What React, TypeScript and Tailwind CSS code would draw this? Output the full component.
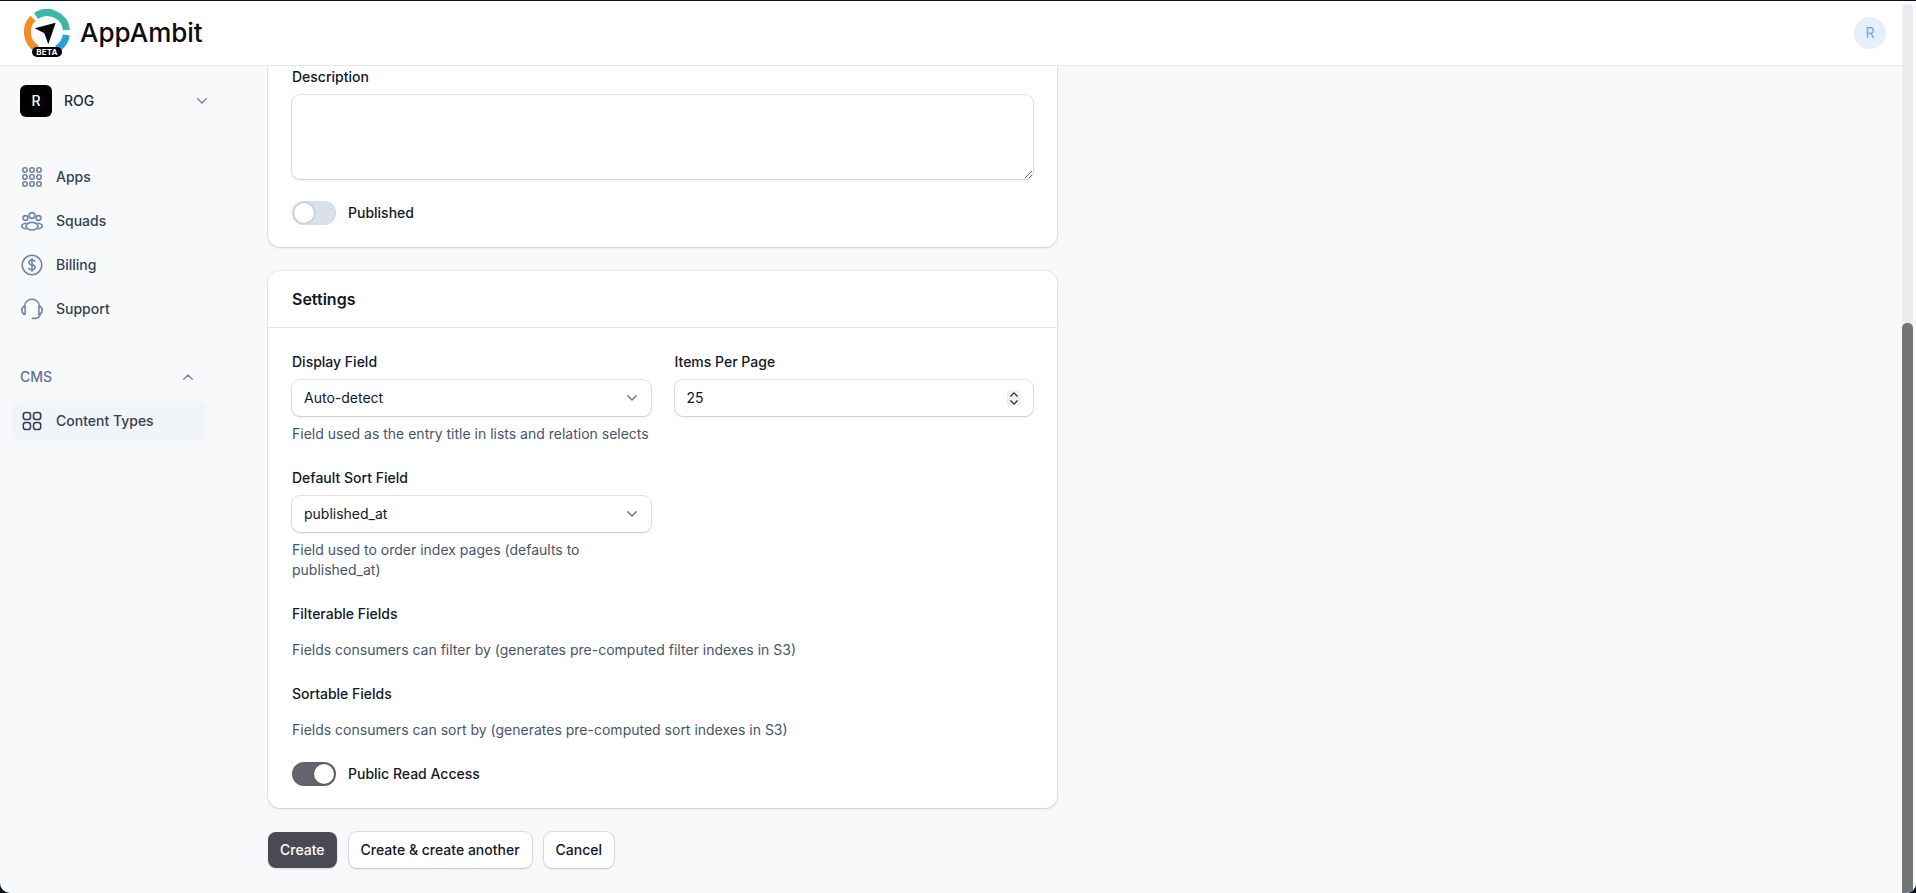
import React from "react";

const iconStroke = "#7385a8";

function Ico({ children, className = "w-6 h-6", color = iconStroke }: { children: React.ReactNode; className?: string; color?: string }) {
  return (
    <svg viewBox="0 0 24 24" fill="none" stroke={color} strokeWidth={1.6} strokeLinecap="round" strokeLinejoin="round" className={`${className} shrink-0`}>
      {children}
    </svg>
  );
}

function Chevron({ up = false, color = "#6b7280", className = "w-[10px] h-[6px]" }: { up?: boolean; color?: string; className?: string }) {
  return (
    <svg viewBox="0 0 10 6" fill="none" stroke={color} strokeWidth={1.4} strokeLinecap="round" strokeLinejoin="round" className={`${className} shrink-0`}>
      <path d={up ? "M.8 5.2 5 1l4.2 4.2" : "M.8.8 5 5 9.2.8"} />
    </svg>
  );
}

function Logo() {
  return (
    <div className="relative w-[54px] h-[54px] shrink-0">
      <svg viewBox="20 6 54 54" className="w-[54px] h-[54px]" fill="none" strokeWidth={7}>
        <path d="M36 16A19.5 19.5 0 0 1 66.5 30" stroke="#3cb8a8" />
        <path d="M66.3 35A19.5 19.5 0 0 1 57 48.7" stroke="#2a9fdc" />
        <path d="M33 18.3A19.5 19.5 0 0 0 37 48.8" stroke="#f28c28" />
        <path d="M34.7 28.3 55.7 22.7 48.3 44.3 44.3 33.3Z" fill="#0c0c0c" />
      </svg>
      <span className="absolute left-[12px] top-[41px] w-[30px] h-[10px] rounded-full bg-black text-white text-[8px] leading-[10px] font-bold text-center tracking-[0.2px]">
        BETA
      </span>
    </div>
  );
}

function NavItem({ label, icon, active = false }: { label: string; icon: React.ReactNode; active?: boolean }) {
  return (
    <div className={`flex items-center gap-3 h-10 pl-2 rounded-lg text-sm font-medium ${active ? "bg-[#f1f4f9] text-[#374151]" : "text-[#334155]"}`}>
      {icon}
      <span>{label}</span>
    </div>
  );
}

function Sidebar() {
  return (
    <aside className="w-[268px] shrink-0 pt-[19px] flex flex-col">
      <div className="flex items-center pl-5 pr-[61px] h-8">
        <div className="w-8 h-8 rounded-md bg-black text-white text-sm font-medium flex items-center justify-center">R</div>
        <span className="ml-3 text-sm font-medium text-[#1e293b]">ROG</span>
        <span className="ml-auto flex"><Chevron color="#7385a8" /></span>
      </div>
      <nav className="mt-10 ml-3 w-[194px] flex flex-col gap-1">
        <NavItem
          label="Apps"
          icon={
            <Ico>
              {[5, 12, 19].map((x) =>
                [5, 12, 19].map((y) => <circle key={`${x}-${y}`} cx={x} cy={y} r={2.2} />)
              )}
            </Ico>
          }
        />
        <NavItem
          label="Squads"
          icon={
            <Ico>
              <circle cx="5.5" cy="9" r="2.4" />
              <circle cx="12" cy="6.5" r="2.9" />
              <circle cx="18.5" cy="9" r="2.4" />
              <ellipse cx="12" cy="17.2" rx="6" ry="3.8" />
              <path d="M6 14.2c-2.2.2-4.2 1.4-4.4 3 .2 1.5 2.2 2.4 5.2 2.5M18 14.2c2.2.2 4.2 1.4 4.4 3-.2 1.5-2.2 2.4-5.2 2.5" />
            </Ico>
          }
        />
        <NavItem
          label="Billing"
          icon={
            <Ico>
              <circle cx="12" cy="12" r="9.8" />
              <path d="M12 5.8v12.4M8.8 15.4l.9.7c1.3 1 3.3 1 4.6 0s1.3-2.5 0-3.5c-.6-.4-1.5-.7-2.3-.7s-1.6-.2-2.2-.7c-1.2-1-1.2-2.5 0-3.5s3.2-1 4.4 0l.4.4" />
            </Ico>
          }
        />
        <NavItem
          label="Support"
          icon={
            <Ico>
              <path d="M4.4 9.4C4.8 5.2 8 2.2 12 2.2s7.2 3 7.6 7.2" />
              <path d="M4.6 9.2C2.9 9.6 1.8 11.2 1.8 13.3s1.1 3.7 2.8 4.1c.3 0 .5-.2.5-.5V9.7c0-.3-.2-.5-.5-.5Z" />
              <path d="M19.4 9.2c1.7.4 2.8 2 2.8 4.1s-1.1 3.7-2.8 4.1c-.3 0-.5-.2-.5-.5V9.7c0-.3.2-.5.5-.5Z" />
              <path d="M20 17.4c-.4 2.4-2.4 3.9-5 4h-2.6" />
            </Ico>
          }
        />
      </nav>
      <div className="mt-[38px] flex items-center justify-between h-5 pl-5 pr-[75px] text-sm font-medium text-[#64748b]">
        <span>CMS</span>
        <Chevron up color="#7385a8" />
      </div>
      <div className="mt-[14px] ml-3 w-[194px]">
        <NavItem
          active
          label="Content Types"
          icon={
            <Ico color="#374151">
              <rect x="3.3" y="3.5" width="7.2" height="7" rx="2.6" />
              <rect x="13.5" y="3.5" width="7.2" height="7" rx="2.6" />
              <rect x="3.3" y="13.5" width="7.2" height="7" rx="2.6" />
              <rect x="13.5" y="13.5" width="7.2" height="7" rx="2.6" />
            </Ico>
          }
        />
      </div>
    </aside>
  );
}

function Label({ children }: { children: React.ReactNode }) {
  return <div className="text-sm leading-5 font-medium text-[#111827]">{children}</div>;
}

function Help({ children }: { children: React.ReactNode }) {
  return <div className="text-sm leading-5 text-[#475569]">{children}</div>;
}

function SelectBox({ value }: { value: string }) {
  return (
    <div className="h-9 rounded-lg bg-white shadow-sm ring-1 ring-gray-950/10 pl-3 pr-[14px] flex items-center justify-between text-sm text-[#111827]">
      <span>{value}</span>
      <Chevron />
    </div>
  );
}

function Toggle({ on, label }: { on: boolean; label: string }) {
  return (
    <div className="flex items-center h-5 gap-3">
      <div className={`w-11 h-6 rounded-full p-[2px] flex shadow-[inset_0_0_2px_rgba(0,0,0,0.1)] ${on ? "bg-[#64646f] justify-end" : "bg-[#dbe1ea] justify-start"}`}>
        <div className="w-5 h-5 rounded-full bg-white shadow-[0_0_2px_rgba(0,0,0,0.35)]" />
      </div>
      <span className="text-sm font-medium text-[#111827]">{label}</span>
    </div>
  );
}

function Card({ children, className = "" }: { children: React.ReactNode; className?: string }) {
  return <section className={`bg-white shadow-sm ring-1 ring-gray-950/5 ${className}`}>{children}</section>;
}

function Main() {
  return (
    <main className="flex-1 min-w-0 overflow-hidden pl-px -ml-px">
      <div className="w-[789px] flex flex-col">
        <Card className="rounded-b-xl px-6 pt-px pb-6">
          <Label>Description</Label>
          <textarea className="mt-2 block w-full h-[84px] rounded-lg bg-white shadow-sm ring-1 ring-gray-950/10 outline-none" />
          <div className="mt-6">
            <Toggle on={false} label="Published" />
          </div>
        </Card>

        <Card className="mt-6 rounded-xl">
          <div className="h-[57px] border-b border-[#e5e7eb] px-6 flex items-center text-base font-semibold text-[#111827] pb-px">Settings</div>
          <div className="p-6 flex flex-col gap-6">
            <div className="grid grid-cols-2 gap-x-6 gap-y-6">
              <div className="flex flex-col gap-2">
                <Label>Display Field</Label>
                <SelectBox value="Auto-detect" />
                <Help>Field used as the entry title in lists and relation selects</Help>
              </div>
              <div className="flex flex-col gap-2">
                <Label>Items Per Page</Label>
                <div className="h-9 rounded-lg bg-white shadow-sm ring-1 ring-gray-950/10 pl-3 pr-3 flex items-center justify-between text-sm text-[#111827]">
                  <span>25</span>
                  <span className="w-[14px] h-4 rounded-[3px] bg-[#f1f1f3] flex flex-col items-center justify-center gap-[3px]">
                    <Chevron up color="#27272a" className="w-[8px] h-[5px]" />
                    <Chevron color="#27272a" className="w-[8px] h-[5px]" />
                  </span>
                </div>
              </div>
              <div className="flex flex-col gap-2">
                <Label>Default Sort Field</Label>
                <SelectBox value="published_at" />
                <Help>Field used to order index pages (defaults to published_at)</Help>
              </div>
            </div>
            <div className="flex flex-col gap-4">
              <Label>Filterable Fields</Label>
              <Help>Fields consumers can filter by (generates pre-computed filter indexes in S3)</Help>
            </div>
            <div className="flex flex-col gap-4">
              <Label>Sortable Fields</Label>
              <Help>Fields consumers can sort by (generates pre-computed sort indexes in S3)</Help>
            </div>
            <Toggle on label="Public Read Access" />
          </div>
        </Card>

        <div className="mt-6 flex gap-3 text-sm font-medium">
          <button className="h-9 px-3 rounded-lg bg-[#4a4a55] text-white shadow-sm">Create</button>
          <button className="h-9 px-3 rounded-lg bg-white text-[#111827] shadow-sm ring-1 ring-gray-950/10">Create &amp; create another</button>
          <button className="h-9 px-3 rounded-lg bg-white text-[#111827] shadow-sm ring-1 ring-gray-950/10">Cancel</button>
        </div>
      </div>
    </main>
  );
}

export default function App() {
  return (
    <div className="h-[893px] w-[1916px] overflow-hidden bg-[#0b0f1f] pt-px font-['Inter',sans-serif] antialiased">
      <div className="h-full flex rounded-b-[10px] overflow-hidden bg-[#f8f9fb]">
        <div className="w-[1902px] shrink-0 flex flex-col">
          <header className="relative z-10 h-[65px] shrink-0 bg-white border-b border-[#e5e7eb] flex items-center justify-between pl-[20px] pr-4">
            <div className="flex items-center gap-[6px] -mt-[1px]">
              <Logo />
              <span className="text-[26px] font-medium text-[#0c0c0c]">AppAmbit</span>
            </div>
            <div className="w-8 h-8 rounded-full bg-[#e6effc] text-[#7c9cf0] text-sm flex items-center justify-center">R</div>
          </header>
          <div className="flex-1 min-h-0 flex">
            <Sidebar />
            <Main />
          </div>
        </div>
        <div className="w-[11px] shrink-0 pt-[3px] bg-[#f9fafb]">
          <div className="h-full rounded-t-[5px] bg-[#ececee] flex flex-col justify-end">
            <div className="h-[570px] rounded-t-[5px] bg-[#737476]" />
          </div>
        </div>
        <div className="w-[3px] shrink-0 bg-[#f9fafb]" />
      </div>
    </div>
  );
}
